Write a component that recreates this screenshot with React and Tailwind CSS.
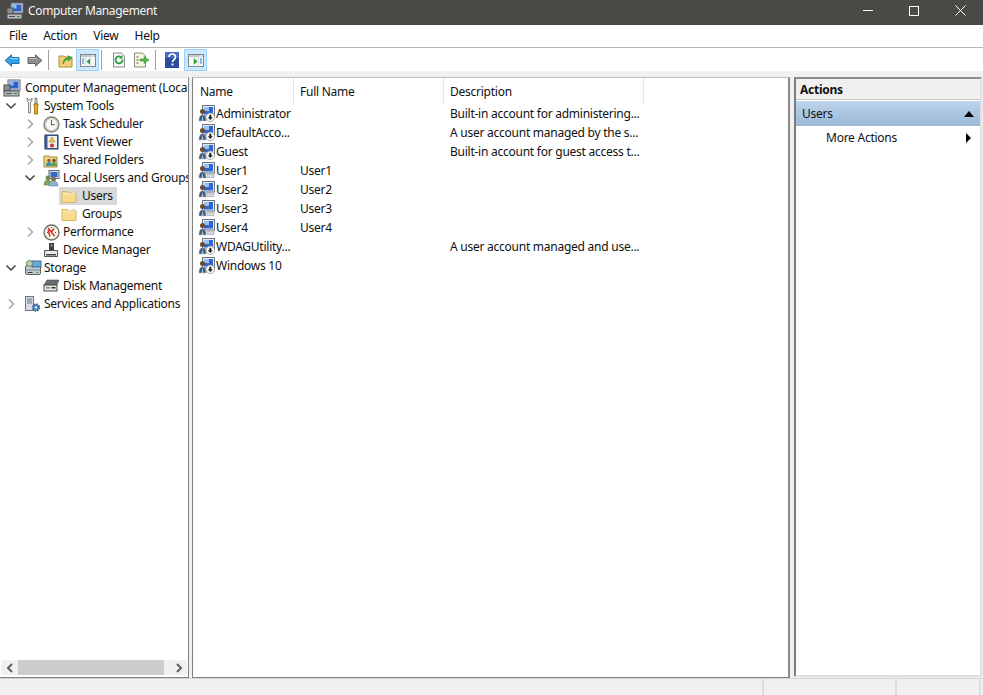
import React from "react";

const Computer = ({ className = "" }) => (
  <svg viewBox="0 0 18 18" width="18" height="18" className={className}>
    <rect x="5" y="1" width="12" height="10" fill="#dfe6ee" stroke="#5a6472" />
    <rect x="6.500" y="2.500" width="9" height="7" fill="#2f62c9" />
    <rect x="6.500" y="2.500" width="4" height="4" fill="#8fb8ee" />
    <rect x="1" y="6" width="6" height="6" fill="#8d8f92" stroke="#4c4f55" />
    <rect x="1" y="12" width="15" height="5" fill="#b9bcc0" stroke="#4c4f55" />
    <rect x="3" y="14" width="6" height="1" fill="#4c4f55" />
    <rect x="11" y="14" width="3" height="1" fill="#2a8f3c" />
  </svg>
);
const Tools = () => (
  <svg viewBox="0 0 16 18" width="16" height="18">
    <path d="M3 1v3l1.500 1V16h2V5L8 4V1L6.500 3h-2z" fill="#f2f2f2" stroke="#6a6a6a" strokeWidth="0.800" />
    <path d="M11 1h2v6h-2z" fill="#d9d9d9" stroke="#6a6a6a" strokeWidth="0.800" />
    <path d="M10 7h4l-.5 4v6h-3v-6z" fill="#f0ac14" stroke="#8f6404" strokeWidth="0.800" />
  </svg>
);
const Clock = () => (
  <svg viewBox="0 0 17 17" width="17" height="17">
    <circle cx="8.500" cy="8.500" r="7.500" fill="#d8d8d0" stroke="#85857d" strokeWidth="1.400" />
    <circle cx="8.500" cy="8.500" r="5.200" fill="#fbfbf6" />
    <path d="M8.500 4v4.800h3.500" fill="none" stroke="#5a5a52" strokeWidth="1.100" />
  </svg>
);
const EventIcon = () => (
  <svg viewBox="0 0 16 16" width="16" height="16">
    <rect x="2" y="1" width="13" height="14" fill="#3f5f9f" stroke="#25406f" />
    <rect x="4.500" y="2" width="9.500" height="12" fill="#eef0f6" />
    <path d="M9 3l3 5H6z" fill="#f4c430" stroke="#9a7a10" strokeWidth="0.500" />
    <circle cx="9" cy="11.500" r="2" fill="#d03030" />
    <path d="M1 3h2M1 6h2M1 9h2M1 12h2" stroke="#555" />
  </svg>
);
const SharedFolder = () => (
  <svg viewBox="0 0 16 16" width="16" height="16">
    <path d="M1 4h5l1 1h7v10H1z" fill="#f1d47e" stroke="#a58a3c" />
    <circle cx="6" cy="8.500" r="1.700" fill="#8a6238" />
    <path d="M3 14c0-3 1-4 3-4s3 1 3 4z" fill="#3d8fb0" />
    <circle cx="11" cy="8.500" r="1.700" fill="#6a4a28" />
    <path d="M8.500 14c0-3 1-4 2.500-4s3 1 3 4z" fill="#58a05a" />
  </svg>
);
const LocalUsers = () => (
  <svg viewBox="0 0 17 17" width="17" height="17">
    <rect x="6" y="0.500" width="10" height="8" fill="#d7e0ea" stroke="#5f6a78" />
    <rect x="7.500" y="2" width="7" height="5" fill="#3268cc" />
    <circle cx="5" cy="8" r="2.400" fill="#7a8a50" />
    <path d="M1 15c0-3.500 1.500-5 4-5s3 1.500 3 5z" fill="#7fa65a" stroke="#54703a" strokeWidth="0.500" />
    <circle cx="10.500" cy="9" r="2.500" fill="#8d6a48" />
    <path d="M6 16c0-3.500 2-5 4.500-5s4.500 1.500 4.500 5z" fill="#8fb3d6" stroke="#56789c" strokeWidth="0.500" />
  </svg>
);
const Folder = () => (
  <svg viewBox="0 0 16 16" width="16" height="16">
    <path d="M1 3.500h5l1 1.500h8v9.500H1z" fill="#f8dc8c" stroke="#d4b765" />
    <path d="M2 6h12.500" stroke="#fdf0c4" />
    <path d="M11 3.500h3.500V5H11z" fill="#fff" stroke="#d4b765" strokeWidth="0.500" />
  </svg>
);
const Perf = () => (
  <svg viewBox="0 0 17 17" width="17" height="17">
    <circle cx="8.500" cy="8.500" r="7.500" fill="#f6f2e6" stroke="#6e6e66" strokeWidth="1.300" />
    <path d="M5 4l6.500 8M5 6l2 6.500M8 8.500l3-4" stroke="#d42020" strokeWidth="1.300" fill="none" />
    <path d="M4 8.500h1M12 8.500h1M8.500 3v1" stroke="#555" />
  </svg>
);
const DeviceMgr = () => (
  <svg viewBox="0 0 16 16" width="16" height="16">
    <rect x="6" y="1" width="5" height="7" fill="#3d3d3d" />
    <rect x="7.500" y="2.500" width="2" height="2" fill="#6ecb63" />
    <path d="M1.500 8.500h13v6h-13z" fill="#e8e8e8" stroke="#555" />
    <rect x="3" y="12" width="10" height="1.500" fill="#444" />
  </svg>
);
const StorageIcon = () => (
  <svg viewBox="0 0 18 18" width="18" height="18">
    <rect x="1.500" y="6.500" width="15" height="9" rx="1.500" fill="#c6ccd2" stroke="#59626c" />
    <rect x="1.500" y="10.500" width="15" height="1" fill="#7d868f" />
    <rect x="8" y="2" width="9" height="6" fill="#5fa9dc" stroke="#3d6f96" />
    <circle cx="5.500" cy="4.500" r="3" fill="#bcd6a8" stroke="#6c8060" />
    <rect x="3.500" y="13" width="5" height="1" fill="#3a3f44" />
    <rect x="12" y="13" width="2" height="1" fill="#45a04c" />
  </svg>
);
const DiskIcon = () => (
  <svg viewBox="0 0 17 16" width="17" height="16">
    <path d="M4 2h12l-2 5H1z" fill="#6a6e72" stroke="#3b3e42" strokeWidth="0.500" />
    <rect x="1" y="7" width="13" height="6" fill="#e6e6e6" stroke="#4d4d4d" />
    <rect x="3" y="9" width="4" height="1.500" fill="#58b04f" />
    <rect x="8.500" y="9" width="4" height="1.500" fill="#333" />
  </svg>
);
const ServicesIcon = () => (
  <svg viewBox="0 0 17 18" width="17" height="18">
    <rect x="1.500" y="1.500" width="8" height="14" fill="#d8dce2" stroke="#6d7580" />
    <path d="M3 4h5M3 6h5M3 8h5" stroke="#6d7580" />
    <circle cx="12" cy="12.500" r="3.200" fill="#5b8fc7" stroke="#37618f" strokeWidth="2" strokeDasharray="1.500 1" />
    <circle cx="12" cy="12.500" r="1" fill="#fff" />
  </svg>
);
const UserIcon = ({ disabled }) => (
  <svg viewBox="0 0 17 17" width="17" height="17">
    <rect x="4.500" y="0.500" width="12" height="10.500" fill="#e4e9ef" stroke="#6c7785" />
    <rect x="6" y="2" width="9" height="7.500" fill="#2f66d4" />
    <rect x="6" y="2" width="5" height="4" fill="#9cc2f2" />
    <circle cx="4.500" cy="6.500" r="2.500" fill="#6b4a30" />
    <path d="M1 16c0-3.800 1-6 3.500-6s3.500 2.200 3.500 6z" fill="#44566c" stroke="#a8b0ba" strokeWidth="0.500" />
    <path d="M4.500 10.500l-1.200 5.500h2.400z" fill="#8fbce4" />
    {disabled ? (
      <g>
        <circle cx="12.300" cy="12.300" r="4.300" fill="#fafafa" stroke="#8a8a8a" strokeWidth="0.700" />
        <path d="M11.300 9.800h2v2.500h1.500l-2.500 2.800-2.500-2.800h1.500z" fill="#222" />
      </g>
    ) : (
      <path d="M9 12h7v3.500H9z" fill="#d3d8de" stroke="#8b95a1" strokeWidth="0.500" />
    )}
  </svg>
);
const Chevron = ({ open }) => (
  <svg viewBox="0 0 12 12" width="12" height="12">
    {open ? (
      <path d="M1.500 3.500L6 8l4.500-4.500" fill="none" stroke="#404040" strokeWidth="1.500" />
    ) : (
      <path d="M4 1.500L8.500 6 4 10.500" fill="none" stroke="#a6a6a6" strokeWidth="1.500" />
    )}
  </svg>
);
const PaneIcon = ({ side }) => (
  <svg viewBox="0 0 16 13" width="16" height="13">
    <rect x="0.500" y="0.500" width="15" height="12" fill="#f8f8f6" stroke="#7d8790" />
    <rect x="1" y="1" width="14" height="2" fill="#bfc7cf" />
    <path d="M11 2h3" stroke="#fff" />
    <path d="M5.500 3.500v9M10.500 3.500v9" stroke="#b8c0c8" strokeDasharray="1 1" />
    {side === "left" ? (
      <g>
        <path d="M2 5h2M2 7h2M2 9h2" stroke="#2d6fd0" />
        <path d="M10 4.500v6L6.500 7.500z" fill="#28a03c" />
      </g>
    ) : (
      <g>
        <path d="M12 5h2M12 7h2M12 9h2" stroke="#2d6fd0" />
        <path d="M6 4.500v6l3.500-3z" fill="#28a03c" />
      </g>
    )}
  </svg>
);
const Arrow = ({ dir, fill, stroke }) => (
  <svg viewBox="0 0 16 13" width="16" height="13" className={dir === "right" ? "" : "-scale-x-100"}>
    <path d="M1 3.500h7.500V.8L15 6.500l-6.500 5.700V9.500H1z" fill={fill} stroke={stroke} strokeLinejoin="round" />
    <path d="M2 4.500h7.500" stroke="#ffffff" strokeOpacity="0.500" />
  </svg>
);
const Sep = ({ className }) => <div className={`w-px h-[20px] bg-[#a0a0a0] ${className}`} />;

const tree = [
  { cls: "pl-[3px]", gap: "w-[22px]", Icon: Computer, label: "Computer Management (Local" },
  { cls: "pl-[5px]", chev: "open", Icon: Tools, label: "System Tools" },
  { cls: "pl-[24px]", chev: "closed", Icon: Clock, label: "Task Scheduler" },
  { cls: "pl-[24px]", chev: "closed", Icon: EventIcon, label: "Event Viewer" },
  { cls: "pl-[24px]", chev: "closed", Icon: SharedFolder, label: "Shared Folders" },
  { cls: "pl-[24px]", chev: "open", Icon: LocalUsers, label: "Local Users and Groups" },
  { cls: "pl-[59px]", Icon: Folder, label: "Users", selected: true },
  { cls: "pl-[59px]", Icon: Folder, label: "Groups" },
  { cls: "pl-[24px]", chev: "closed", Icon: Perf, label: "Performance" },
  { cls: "pl-[24px]", chev: "none", Icon: DeviceMgr, label: "Device Manager" },
  { cls: "pl-[5px]", chev: "open", Icon: StorageIcon, label: "Storage" },
  { cls: "pl-[24px]", chev: "none", Icon: DiskIcon, label: "Disk Management" },
  { cls: "pl-[5px]", chev: "closed", Icon: ServicesIcon, label: "Services and Applications" },
];

const users = [
  ["Administrator", "", "Built-in account for administering...", true],
  ["DefaultAcco...", "", "A user account managed by the s...", true],
  ["Guest", "", "Built-in account for guest access t...", true],
  ["User1", "User1", "", false],
  ["User2", "User2", "", false],
  ["User3", "User3", "", false],
  ["User4", "User4", "", false],
  ["WDAGUtility...", "", "A user account managed and use...", true],
  ["Windows 10", "", "", true],
];

export default function App() {
  return (
    <div
      className="w-[983px] h-[695px] flex flex-col overflow-hidden bg-[#f0f0f0] text-[12px] tracking-[-0.25px] text-[#111] whitespace-nowrap"
      style={{ fontFamily: '"Noto Sans", "Open Sans", sans-serif' }}
    >
      {/* Title bar */}
      <div className="h-[25px] shrink-0 bg-[#4b4946] flex items-center pb-[4px] text-white">
        <div className="ml-[6px] w-[22px]">
          <Computer />
        </div>
        <span className="text-[#f4f4f4] tracking-[-0.35px]">Computer Management</span>
        <div className="ml-auto flex items-center text-white">
          <div className="w-[46px] flex justify-center">
            <div className="w-[10px] h-px bg-white" />
          </div>
          <div className="w-[46px] flex justify-center">
            <div className="w-[10px] h-[10px] border border-white" />
          </div>
          <div className="w-[46px] flex justify-center">
            <svg viewBox="0 0 11 11" width="11" height="11">
              <path d="M0.500 0.500l10 10M10.500 0.500l-10 10" stroke="#fff" strokeWidth="1" />
            </svg>
          </div>
        </div>
      </div>

      {/* Menu */}
      <div className="h-[23px] shrink-0 bg-white border-b border-[#b4b4bc] flex items-center pl-[9px] gap-[16px]">
        <span>File</span>
        <span>Action</span>
        <span>View</span>
        <span>Help</span>
      </div>

      {/* Toolbar */}
      <div className="h-[23px] pt-px shrink-0 bg-white flex items-center pl-[4px]">
        <Arrow dir="left" fill="#35a2e8" stroke="#1e73b8" />
        <div className="ml-[7px]">
          <Arrow dir="right" fill="#8c8c8c" stroke="#666666" />
        </div>
        <Sep className="ml-[5px]" />
        <div className="ml-[9px]">
          <svg viewBox="0 0 16 16" width="16" height="16">
            <path d="M1 4h5l1 1h7v10H1z" fill="#f3cf76" stroke="#b08e3e" />
            <path d="M5 12c0-4 2-6 5-6V3.500L14 6l-3.500 3V7.500C8 7.500 6.500 9 5 12z" fill="#3fae49" stroke="#23782c" strokeWidth="0.500" />
          </svg>
        </div>
        <div className="ml-[2px] w-[23px] h-[22px] bg-[#cce8ff] border border-[#99d1ff] flex items-center justify-center">
          <PaneIcon side="left" />
        </div>
        <Sep className="ml-[2px]" />
        <div className="ml-[9px]">
          <svg viewBox="0 0 16 16" width="16" height="16">
            <path d="M2.500 1h8l3 3v11h-11z" fill="#f7f7f7" stroke="#8a8a8a" />
            <path d="M11.500 7.500a3.500 3.500 0 1 1-1.200-2.300" fill="none" stroke="#2f9e3e" strokeWidth="1.800" />
            <path d="M11.500 3v3.500H8z" fill="#2f9e3e" />
          </svg>
        </div>
        <div className="ml-[6px]">
          <svg viewBox="0 0 17 16" width="17" height="16">
            <path d="M1.500 1h8l3 3v11h-11z" fill="#faf6e2" stroke="#8a8a7a" />
            <path d="M3.500 5h2M3.500 8h2M3.500 11h2" stroke="#555" />
            <path d="M7 7h4V4.500L16 8l-5 3.500V9H7z" fill="#55b848" stroke="#2f8a2c" strokeWidth="0.500" />
          </svg>
        </div>
        <Sep className="ml-[5px]" />
        <div className="ml-[9px]">
          <svg viewBox="0 0 14 16" width="14" height="16">
            <rect x="0" y="0" width="14" height="16" fill="#2c4aa0" />
            <rect x="0" y="0" width="14" height="6" fill="#4a68c2" />
            <path d="M4 5c0-4 6.500-4 6.500 0 0 3-3 2.500-3 5" fill="none" stroke="#fff" strokeWidth="1.700" />
            <rect x="6.500" y="11.500" width="2" height="2" fill="#fff" />
          </svg>
        </div>
        <div className="ml-[5px] w-[23px] h-[22px] bg-[#cce8ff] border border-[#99d1ff] flex items-center justify-center">
          <PaneIcon side="right" />
        </div>
      </div>

      {/* Panes */}
      <div className="flex-1 min-h-0 flex pt-[6px]">
        {/* Tree */}
        <div className="w-[189px] shrink-0 bg-white border-t border-t-[#e4e4e4] border-r border-r-[#808080] border-b border-b-[#808088] flex flex-col">
          <div className="flex-1 pt-px overflow-hidden">
            {tree.map((t) => (
              <div key={t.label} className={`h-[18px] flex items-center ${t.cls}`}>
                {t.chev && (
                  <div className="w-[19px] shrink-0 flex">
                    {t.chev !== "none" && <Chevron open={t.chev === "open"} />}
                  </div>
                )}
                <div className={`flex items-center h-[18px] ${t.selected ? "bg-[#d9d9d9] pr-[4px]" : ""}`}>
                  <div className={`${t.gap ?? "w-[20px]"} shrink-0 flex ${t.Icon === Folder ? "pl-[2px] w-[23px]" : ""}`}>
                    <t.Icon />
                  </div>
                  <span>{t.label}</span>
                </div>
              </div>
            ))}
          </div>
          <div className="h-[15px] mx-px mb-[2px] bg-[#f0f0f0] flex items-center text-[#666]">
            <div className="w-[17px] flex justify-center">
              <svg viewBox="0 0 8 10" width="8" height="10">
                <path d="M6 1L2 5l4 4" fill="none" stroke="#606060" strokeWidth="2" />
              </svg>
            </div>
            <div className="w-[146px] h-[15px] bg-[#cdcdcd]" />
            <div className="w-[23px] pr-[4px] flex justify-end">
              <svg viewBox="0 0 8 10" width="8" height="10">
                <path d="M2 1l4 4-4 4" fill="none" stroke="#606060" strokeWidth="2" />
              </svg>
            </div>
          </div>
        </div>

        {/* List */}
        <div className="ml-[3px] w-[598px] shrink-0 bg-white border-t border-l border-r-2 border-b border-t-[#c0c0c0] border-l-[#808080] border-r-[#8a8a8a] border-b-[#808088]">
          <div className="h-[26px] flex items-center">
            <div className="w-[101px] h-full pl-[7px] pt-[2px] border-r border-[#e5e5e5] flex items-center">Name</div>
            <div className="w-[150px] h-full pl-[6px] pt-[2px] border-r border-[#e5e5e5] flex items-center">Full Name</div>
            <div className="w-[200px] h-full pl-[6px] pt-[2px] border-r border-[#e5e5e5] flex items-center">Description</div>
          </div>
          {users.map(([name, full, desc, disabled]) => (
            <div key={name} className="h-[19px] flex items-center">
              <div className="w-[101px] pl-[5px] flex items-center">
                <div className="w-[18px] flex shrink-0">
                  <UserIcon disabled={disabled} />
                </div>
                <span>{name}</span>
              </div>
              <div className="w-[150px] pl-[6px]">{full}</div>
              <div className="w-[200px] pl-[6px]">{desc}</div>
            </div>
          ))}
        </div>

        {/* Actions */}
        <div className="ml-[4px] w-[188px] mb-px shrink-0 bg-white border-t-2 border-l-2 border-r-2 border-b-2 border-t-[#8c8c8c] border-l-[#7c7c7c] border-r-[#e0e0e0] border-b-[#e0e0e0] flex flex-col">
          <div className="h-[20px] pt-[2px] bg-[#f0f0f0] font-bold flex items-center pl-[4px]">Actions</div>
          <div className="h-px bg-[#c8c8c8]" />
          <div className="h-px bg-white" />
          <div className="h-[25px] bg-gradient-to-b from-[#bcd4eb] to-[#9cb8d6] flex items-center pl-[6px] pr-[6px] justify-between">
            <span>Users</span>
            <svg viewBox="0 0 10 6" width="10" height="6">
              <path d="M5 0l5 6H0z" fill="#000" />
            </svg>
          </div>
          <div className="h-[24px] flex items-center pl-[30px] pr-[9px] justify-between">
            <span>More Actions</span>
            <svg viewBox="0 0 5 10" width="5" height="10">
              <path d="M0 0l5 5-5 5z" fill="#000" />
            </svg>
          </div>
        </div>
      </div>

      {/* Status bar */}
      <div className="h-[17px] shrink-0 bg-[#f0f0f0] border-t border-[#d4d4d4] flex justify-end">
        <div className="w-[133px] border-l-2 border-[#dcdcdc]" />
        <div className="w-[86px] border-l-2 border-r-2 border-[#dcdcdc] mr-[2px]" />
      </div>
    </div>
  );
}
